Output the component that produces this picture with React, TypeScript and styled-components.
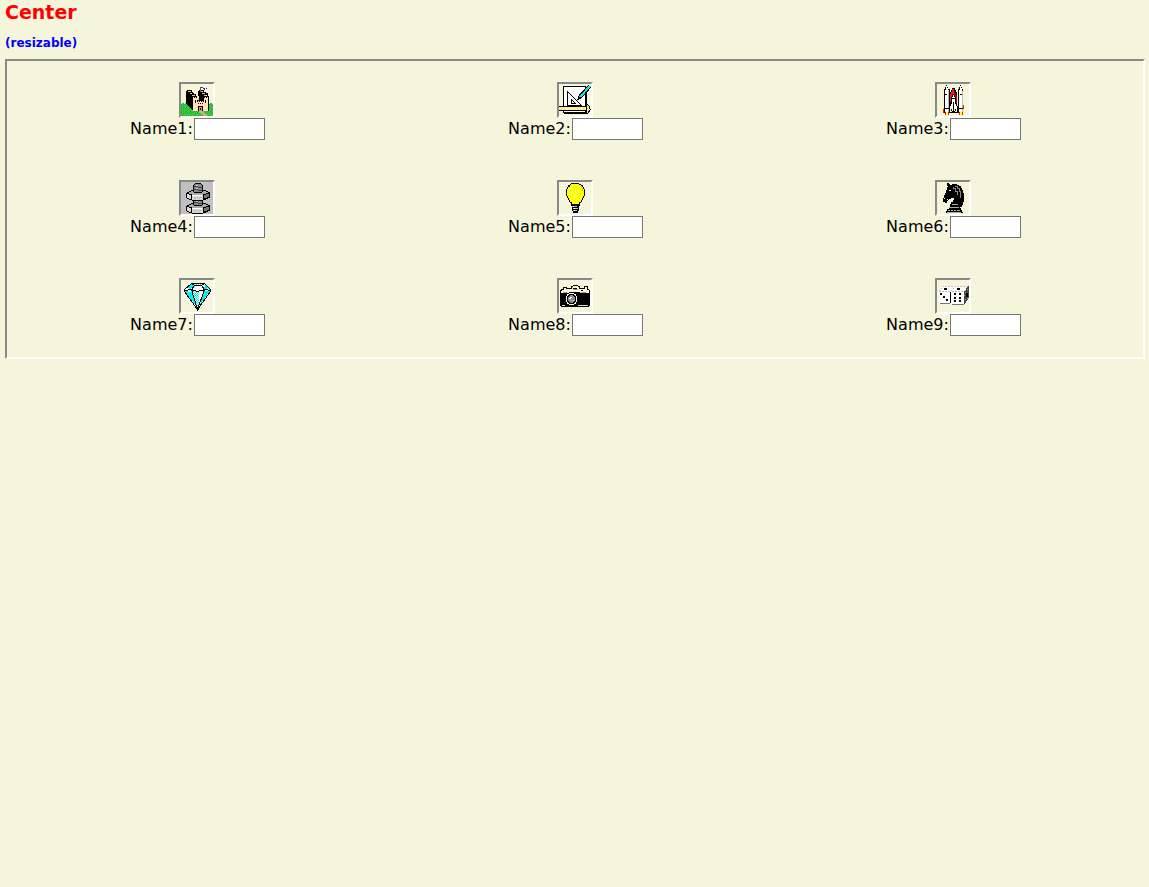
import React from 'react';
import styled, { createGlobalStyle } from 'styled-components';

const GlobalStyle = createGlobalStyle`
  body {
    margin: 0;
    padding: 0 4px 0 5px;
    background: #f5f5dc;
    color: #000;
    font-family: Verdana, "DejaVu Sans", sans-serif;
    font-size: 16px;
  }
`;

const Title = styled.h1`
  margin: 0;
  color: #f00;
  font-size: 19px;
  line-height: 24px;
`;

const Note = styled.h2`
  margin: 12px 0 9px;
  color: #00f;
  font-size: 12px;
  line-height: 14px;
`;

const Panel = styled.form`
  display: grid;
  grid-template-columns: repeat(3, 1fr);
  padding: 1px;
  border: 2px solid;
  border-color: #888 #fff #fff #888;
`;

const Cell = styled.div`
  display: flex;
  flex-direction: column;
  align-items: center;
  padding: 20px 0;
`;

const Frame = styled.span<{ $fill?: string }>`
  display: flex;
  border: 2px solid;
  border-color: #888 #fff #fff #888;
  background: ${(p) => p.$fill ?? 'transparent'};
`;

const Field = styled.label`
  display: flex;
  gap: 1px;
  height: 22px;
  padding-left: 1px;
  line-height: 21px;
`;

const NameInput = styled.input`
  box-sizing: border-box;
  width: 71px;
  height: 22px;
  padding: 1px 2px;
  border: 1px solid #767676;
  background: #fff;
  font: inherit;
`;

const Art = styled.svg.attrs({ viewBox: '0 0 32 32', 'aria-hidden': true, shapeRendering: 'crispEdges' })`
  display: block;
  width: 32px;
  height: 32px;
`;

const Castle = () => (
  <Art>
    <defs>
      <pattern id="grass" width="4" height="4" patternUnits="userSpaceOnUse">
        <path fill="#32cd32" d="M0 0h4v4H0z" />
        <path fill="#2a9a50" d="M0 0h1v1H0zM2 1h1v1H2zM1 3h1v1H1z" />
      </pattern>
    </defs>
    <path fill="url(#grass)" d="M0 20h1v-1h2v1h1v-1h24v1h1v-1h2v1h1v12H0z" />
    <path d="M5 7h1V6h5v2h1v1h1v1h2v2h1v4h7v11H12v-1h-1v-1h-1v-1H9v-1H8v-1H7v-1H6v-1H5z" />
    <path d="M17 7h1V6h5v2h2v1h2v3h1v15h-5V16h-5v-4h-1z" />
    <path fill="#f5f5dc" d="M11 6h1v1h-1zM13 8h2v1h-2zM16 10h1v5h-1z" />
    <path fill="#e8c49a" d="M7 7h3v1H7zM9 9h2v1H9zM11 11h3v1h-3zM19 7h3v1h-3zM21 9h3v1h-3zM23 11h3v1h-3zM17 14h1v2h-1z" />
    <path fill="#ffe0b8" d="M12 13h1v1h1v-1h1v1h1v4h1v-1h1v1h1v-1h1v1h1v-1h1v1h1v-4h1v-1h1v1h1v-1h1v14H12z" />
    <path d="M14 16h1v3h-1zM24 16h1v3h-1zM17 19h1v1h-1zM19 19h1v1h-1zM21 19h1v1h-1zM17 22h5v5h-5zM27 13h1v14h-1z" />
    <path fill="#d2a071" d="M18 23h3v4h-3z" />
    <path d="M19 24h1v2h-1z" />
    <path fill="#d2a98a" d="M18 27h4v1h1v1h1v1h2v2h-4v-1h-1v-1h-1v-1h-2z" />
    <path fill="#a54818" d="M19 3h1v5h-1z" />
    <path fill="#22e" d="M20 3h2v1h2v1h1V4h1v1h-2v1h-1V5h-1V4h-2z" />
  </Art>
);

const Drafting = () => (
  <Art>
    <path fill="#fff" stroke="#000" d="M4.500 2.500h22v26h-22z" />
    <path d="M5 29h23v1H5zM27 4h1v26h-1z" />
    <path fill="none" stroke="#000" d="M8.500 7.500v14h14zM12.500 15.500v4h4z" />
    <path stroke="#000" strokeWidth="4" d="M31 2L20 14" />
    <path stroke="#20d8e0" strokeWidth="2" d="M31 2L21 13" />
    <path d="M18 15h2v1h-2zM19 14h2v1h-2z" />
    <path d="M0 22h28v5H0z" />
    <path fill="#ffe98a" d="M0 23h27v3H0z" />
    <path fill="#fff" d="M1 24h1v1H1zM4 24h1v1H4zM7 24h1v1H7zM10 24h1v1h-1zM13 24h1v1h-1zM16 24h1v1h-1zM19 24h1v1h-1zM22 24h1v1h-1z" />
    <path fill="#f5e19a" stroke="#000" d="M27.500 20.500h1l2 2v2l1 1-3 4h-1z" />
  </Art>
);

const Shuttle = () => (
  <Art>
    <path d="M9 1h1v2h1v2h1v24H7V5h1V3h1zM23 1h1v2h1v2h1v24h-5V5h1V3h1z" />
    <path fill="#fff" d="M9 2h1v2h1v2h1v22H8V6h1zM23 2h1v2h1v22h1v2h-4V6h1z" />
    <path fill="#bbb" d="M11 7h1v21h-1zM25 7h1v21h-1z" />
    <path d="M12 5h1v24h-1zM21 5h1v24h-1zM8 10h2v1H8zM8 24h4v1H8zM23 10h2v1h-2zM22 24h4v1h-4z" />
    <path d="M13 8h1V6h1V4h3v2h1v2h1v15h-7z" />
    <path fill="#f01820" d="M13 10h1V8h1V5h2v2h1v2h1v9h-6z" />
    <path fill="#a01018" d="M17 7h1v2h1v2h1v8h-2v-8h-1z" />
    <path d="M14 13h1v-2h1v-1h1v1h1v2h1v7h1v2h1v7h-9v-7h1v-2h1z" />
    <path fill="#fff" d="M15 13h1v-2h1v2h1v7h1v2h1v5h-3v-3h-1v3h-3v-5h1v-2h1z" />
    <path d="M15 14h3v1h-3zM16 18h1v7h-1zM14 25h1v2h-1zM18 25h1v2h-1z" />
    <path fill="#e31d18" d="M6 25h1v4H6zM8 28h1v3H8zM11 28h1v3h-1zM22 28h1v3h-1zM25 28h1v3h-1zM26 21h1v4h-1z" />
    <path fill="#ff3" d="M9 28h2v3H9zM23 28h2v3h-2zM6 23h1v2H6zM26 25h1v3h-1zM13 27h2v1h-2zM18 27h2v1h-2z" />
  </Art>
);

const Bolt = () => (
  <Art>
    <path d="M12 3h1V2h1V1h6v1h1v1h1v9H12zM12 17h10v6H12z" />
    <path fill="#888" d="M13 3h1V2h6v1h1v8h-8zM13 18h8v4h-8z" />
    {[0, 13].map((y) => (
      <g key={y} transform={`translate(0 ${y})`}>
        <path d="M5 11h1v-1h2V9h2V8h15v1h2v1h2v6h-2v1h-2v1h-3v1H11v-1H8v-1H6v-1H5z" />
        <path fill="#aaa" d="M8 10h2V9h15v1h2v1h-2v1h-3v1H11v-1H8z" />
        <path fill="#ddd" d="M6 12h2v1h2v4H8v-1H6z" />
        <path fill="#d8d8d8" d="M11 13h11v5H11z" />
        <path fill="#fff" d="M11 13h10v1H11z" />
        <path fill="#aaa" d="M13 15h1v1h-1zM16 15h1v1h-1zM19 15h1v1h-1zM14 16h1v1h-1zM18 16h1v1h-1z" />
        <path fill="#777" d="M23 13h2v-1h3v3h-2v1h-3z" />
      </g>
    ))}
    <path d="M12 7h10v3h-1v1h-8v-1h-1zM12 19h10v4h-1v1h-8v-1h-1z" />
    <path fill="#888" d="M13 7h8v3h-8zM13 19h8v4h-8z" />
    <path fill="#444" d="M13 4h4v1h4v1h-4V5h-4zM13 7h4v1h4v1h-4V8h-4zM13 20h4v1h4v1h-4v-1h-4z" />
    <path fill="#ccc" d="M15 3h2v1h-2zM15 6h2v1h-2zM15 19h2v1h-2z" />
  </Art>
);

const Bulb = () => (
  <Art>
    <path d="M12 1h8v1h2v1h2v2h1v2h1v7h-1v2h-1v2h-1v2h-1v1h-1v3h-9v-3h-1v-1h-1v-2H9v-2H8v-2H7V7h1V5h1V3h2V2h1z" />
    <path fill="#ff0" d="M12 2h8v1h2v2h2v2h1v7h-1v2h-1v2h-1v2h-2v3h-7v-3h-2v-2h-1v-2H9v-2H8V7h1V5h2V3h1z" />
    <path fill="#fff" d="M11 5h1V4h2v1h-2v2h-1v2h-1V7h1zM12 12h1v1h-1zM14 11h1v1h-1zM16 12h1v1h-1zM18 11h1v1h-1zM20 12h1v1h-1zM13 9h1v1h-1zM16 9h1v1h-1zM19 9h1v1h-1zM15 14h1v1h-1zM17 14h1v1h-1z" />
    <path fill="#d8c915" d="M22 4h1v2h1v3h-1V6h-1z" />
    <path d="M13 22h7v7h-1v2h-5v-2h-1z" />
    <path fill="#c0c0c0" d="M13 24h5v1h-5zM14 26h5v1h-5zM14 28h4v1h-4z" />
    <path fill="#fff" d="M14 24h1v1h-1zM15 26h1v1h-1zM15 28h1v1h-1z" />
  </Art>
);

const Knight = () => (
  <Art>
    <path d="M10 1h2v1h1v1h2V2h5v1h2v1h2v2h1v2h1v3h1v9h-1v3h-1v2h-2v1h1v2h1v2h1v1H9v-2h1v-2h2v-2h1v-3h1v-2h2v-2h1v-2h-3v1h-2v1h-1v1h-1v2H8v-1H6v-4h1v-3h1v-2h1V8h1V5h1V4h-1z" />
    <path fill="#f5f5dc" d="M12 8h2v1h-2zM7 16h1v1H7zM10 17h1v1h-1z" />
    <path fill="none" stroke="#888" d="M18 4.500h2v2h2v3h1v6M16.500 5v1h2v3h2v4" />
    <path fill="#aaa" d="M12 25h10v1H12zM11 28h2v1h-2zM14 28h2v1h-2zM17 28h2v1h-2zM20 28h3v1h-3zM10 30h14v1H10zM15 22h6v1h-6z" />
  </Art>
);

const Diamond = () => (
  <Art>
    <defs>
      <pattern id="sparkle" width="2" height="2" patternUnits="userSpaceOnUse">
        <path fill="#fff" d="M0 0h2v2H0z" />
        <path fill="#0ee" d="M0 0h1v1H0zM1 1h1v1H1z" />
      </pattern>
    </defs>
    <g transform="translate(1 0)">
      <path fill="#fff" d="M9 3h13l7 6v2L16 29 2 11V9z" />
      <path fill="#0ee" d="M4 8l5-4h3l-3 5zM23 4l5 5-6 1zM2 11l8 1 5 15zM22 11h6L18 25z" />
      <path fill="url(#sparkle)" d="M12 4h7l-5 5H9zM9 11h8v15h-2zM24 8h4v2h-5z" />
      <path fill="#fff" d="M14 5h4l2 4h-8z" />
      <path fill="none" stroke="#000" d="M9.500 3.500h13l6 6v2L15.500 29.500 2.500 11.500v-2zM2.500 10.500l7-1 6 2 7-2 6 1M9.500 3.500l3 2-3 4 6 20 7-20-3-4 3-2M12.500 5.500h7" />
      <path d="M9 10h3v1H9zM19 10h3v1h-3zM15 27h2v3h-2z" />
    </g>
  </Art>
);

const Camera = () => (
  <Art>
    <path d="M1 10h1V9h2V7h4v1h4V6h2V5h5v1h2v2h4V6h4v3h1v1h1v16h-1v1H2v-1H1z" />
    <path fill="#fff8df" d="M2 11h1v-1h2V8h2v1h6V7h1V6h5v1h1v2h6V7h2v3h2v3h-9v-1H10v1H2z" />
    <path fill="#999" d="M4 12h4v1H4zM22 12h5v1h-5zM14 9h5v1h-5z" />
    <path d="M14 8h4v1h-4zM22 10h2v1h-2z" />
    <path fill="#ddd" d="M3 25h3v1H3zM19 25h10v1H19z" />
    <path fill="#fff8df" d="M10 13h5v1h2v2h1v6h-1v2h-2v1h-5v-1H8v-2H7v-6h1v-2h2z" />
    <path d="M10 14h5v1h1v1h1v6h-1v1h-1v1h-5v-1H9v-1H8v-6h1v-1h1z" />
    <path fill="#888" d="M11 15h3v1h1v1h1v4h-1v1h-1v1h-3v-1h-1v-1H9v-4h1v-1h1z" />
    <path fill="#fff" d="M10 18h1v-1h2v1h-1v1h-2z" />
    <path fill="#bbb" d="M12 20h3v1h-3z" />
  </Art>
);

const Dice = () => (
  <Art>
    <path fill="#fff" d="M1 11l5-5h11l-3 5v13H3z" />
    <path fill="#fff" d="M14 11l5-5h12l-4 5v13H14z" />
    <path fill="#444" d="M27 11h1v-1h1V8h1V7h1V6h1v12h-1v2h-1v1h-1v2h-1v1h-1z" />
    <path fill="none" stroke="#bbb" strokeDasharray="2 1" d="M1.500 11.500l5-5h10M1.500 11.500h12l5-5h12M14.500 11.500h12" />
    <path fill="#777" d="M3 23h10v1H3zM15 24h12v1H15z" />
    <path d="M13 12h1v11h-1z" />
    <path d="M7 8h3v2H7zM20 8h3v2h-3zM3 13h2v2H3zM6 16h2v2H6zM9 19h2v2H9z" />
    <path d="M17 13h2v2h-2zM22 13h2v2h-2zM17 17h2v2h-2zM22 17h2v2h-2zM17 20h2v2h-2zM22 20h2v2h-2z" />
    <path d="M29 13h2v4h-2z" />
    <path fill="#999" d="M28 12h1v1h-1zM30 9h1v1h-1zM28 19h1v1h-1zM30 18h1v1h-1zM27 15h1v1h-1zM28 10h1v1h-1z" />
  </Art>
);

const items = [
  { name: 'Name1', Icon: Castle },
  { name: 'Name2', Icon: Drafting },
  { name: 'Name3', Icon: Shuttle },
  { name: 'Name4', Icon: Bolt, fill: '#c0c0c0' },
  { name: 'Name5', Icon: Bulb },
  { name: 'Name6', Icon: Knight },
  { name: 'Name7', Icon: Diamond },
  { name: 'Name8', Icon: Camera },
  { name: 'Name9', Icon: Dice },
];

export default function App() {
  return (
    <main>
      <GlobalStyle />
      <Title>Center</Title>
      <Note>(resizable)</Note>
      <Panel>
        {items.map(({ name, Icon, fill }) => (
          <Cell key={name}>
            <Frame $fill={fill}>
              <Icon />
            </Frame>
            <Field>
              {name}:
              <NameInput type="text" name={name.toLowerCase()} />
            </Field>
          </Cell>
        ))}
      </Panel>
    </main>
  );
}
